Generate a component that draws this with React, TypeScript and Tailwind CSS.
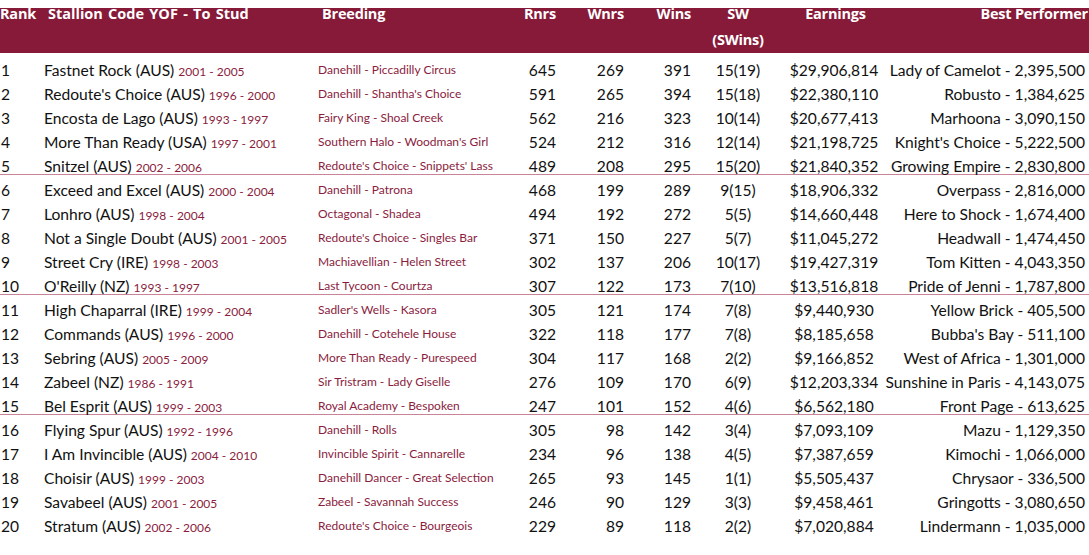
import React from 'react';

interface Sire {
  rank: number;
  name: string;
  yof: string;
  breeding: string;
  rnrs: number;
  wnrs: number;
  wins: number;
  sw: string;
  earnings: string;
  best: string;
}

const sires: Sire[] = [
  { rank: 1, name: 'Fastnet Rock (AUS)', yof: '2001 - 2005', breeding: 'Danehill - Piccadilly Circus', rnrs: 645, wnrs: 269, wins: 391, sw: '15(19)', earnings: '$29,906,814', best: 'Lady of Camelot - 2,395,500' },
  { rank: 2, name: "Redoute's Choice (AUS)", yof: '1996 - 2000', breeding: "Danehill - Shantha's Choice", rnrs: 591, wnrs: 265, wins: 394, sw: '15(18)', earnings: '$22,380,110', best: 'Robusto - 1,384,625' },
  { rank: 3, name: 'Encosta de Lago (AUS)', yof: '1993 - 1997', breeding: 'Fairy King - Shoal Creek', rnrs: 562, wnrs: 216, wins: 323, sw: '10(14)', earnings: '$20,677,413', best: 'Marhoona - 3,090,150' },
  { rank: 4, name: 'More Than Ready (USA)', yof: '1997 - 2001', breeding: "Southern Halo - Woodman's Girl", rnrs: 524, wnrs: 212, wins: 316, sw: '12(14)', earnings: '$21,198,725', best: "Knight's Choice - 5,222,500" },
  { rank: 5, name: 'Snitzel (AUS)', yof: '2002 - 2006', breeding: "Redoute's Choice - Snippets' Lass", rnrs: 489, wnrs: 208, wins: 295, sw: '15(20)', earnings: '$21,840,352', best: 'Growing Empire - 2,830,800' },
  { rank: 6, name: 'Exceed and Excel (AUS)', yof: '2000 - 2004', breeding: 'Danehill - Patrona', rnrs: 468, wnrs: 199, wins: 289, sw: '9(15)', earnings: '$18,906,332', best: 'Overpass - 2,816,000' },
  { rank: 7, name: 'Lonhro (AUS)', yof: '1998 - 2004', breeding: 'Octagonal - Shadea', rnrs: 494, wnrs: 192, wins: 272, sw: '5(5)', earnings: '$14,660,448', best: 'Here to Shock - 1,674,400' },
  { rank: 8, name: 'Not a Single Doubt (AUS)', yof: '2001 - 2005', breeding: "Redoute's Choice - Singles Bar", rnrs: 371, wnrs: 150, wins: 227, sw: '5(7)', earnings: '$11,045,272', best: 'Headwall - 1,474,450' },
  { rank: 9, name: 'Street Cry (IRE)', yof: '1998 - 2003', breeding: 'Machiavellian - Helen Street', rnrs: 302, wnrs: 137, wins: 206, sw: '10(17)', earnings: '$19,427,319', best: 'Tom Kitten - 4,043,350' },
  { rank: 10, name: "O'Reilly (NZ)", yof: '1993 - 1997', breeding: 'Last Tycoon - Courtza', rnrs: 307, wnrs: 122, wins: 173, sw: '7(10)', earnings: '$13,516,818', best: 'Pride of Jenni - 1,787,800' },
  { rank: 11, name: 'High Chaparral (IRE)', yof: '1999 - 2004', breeding: "Sadler's Wells - Kasora", rnrs: 305, wnrs: 121, wins: 174, sw: '7(8)', earnings: '$9,440,930', best: 'Yellow Brick - 405,500' },
  { rank: 12, name: 'Commands (AUS)', yof: '1996 - 2000', breeding: 'Danehill - Cotehele House', rnrs: 322, wnrs: 118, wins: 177, sw: '7(8)', earnings: '$8,185,658', best: "Bubba's Bay - 511,100" },
  { rank: 13, name: 'Sebring (AUS)', yof: '2005 - 2009', breeding: 'More Than Ready - Purespeed', rnrs: 304, wnrs: 117, wins: 168, sw: '2(2)', earnings: '$9,166,852', best: 'West of Africa - 1,301,000' },
  { rank: 14, name: 'Zabeel (NZ)', yof: '1986 - 1991', breeding: 'Sir Tristram - Lady Giselle', rnrs: 276, wnrs: 109, wins: 170, sw: '6(9)', earnings: '$12,203,334', best: 'Sunshine in Paris - 4,143,075' },
  { rank: 15, name: 'Bel Esprit (AUS)', yof: '1999 - 2003', breeding: 'Royal Academy - Bespoken', rnrs: 247, wnrs: 101, wins: 152, sw: '4(6)', earnings: '$6,562,180', best: 'Front Page - 613,625' },
  { rank: 16, name: 'Flying Spur (AUS)', yof: '1992 - 1996', breeding: 'Danehill - Rolls', rnrs: 305, wnrs: 98, wins: 142, sw: '3(4)', earnings: '$7,093,109', best: 'Mazu - 1,129,350' },
  { rank: 17, name: 'I Am Invincible (AUS)', yof: '2004 - 2010', breeding: 'Invincible Spirit - Cannarelle', rnrs: 234, wnrs: 96, wins: 138, sw: '4(5)', earnings: '$7,387,659', best: 'Kimochi - 1,066,000' },
  { rank: 18, name: 'Choisir (AUS)', yof: '1999 - 2003', breeding: 'Danehill Dancer - Great Selection', rnrs: 265, wnrs: 93, wins: 145, sw: '1(1)', earnings: '$5,505,437', best: 'Chrysaor - 336,500' },
  { rank: 19, name: 'Savabeel (AUS)', yof: '2001 - 2005', breeding: 'Zabeel - Savannah Success', rnrs: 246, wnrs: 90, wins: 129, sw: '3(3)', earnings: '$9,458,461', best: 'Gringotts - 3,080,650' },
  { rank: 20, name: 'Stratum (AUS)', yof: '2002 - 2006', breeding: "Redoute's Choice - Bourgeois", rnrs: 229, wnrs: 89, wins: 118, sw: '2(2)', earnings: '$7,020,884', best: 'Lindermann - 1,035,000' },
];

// Column widths measured off the print layout
const cols = 'grid grid-cols-[44px_274px_182px_56px_68px_67px_94px_98px_202px]';

export default function App() {
  return (
    <div className="w-[1089px] h-[555px] bg-white pt-[8px] overflow-hidden text-[#111111]" style={{ fontFamily: 'Lato, "Noto Sans", sans-serif' }}>
      <div className="h-[45px] bg-[#861a38] overflow-hidden">
        <div
          className={`${cols} -mt-[7px] text-white font-bold text-[14.5px] leading-[26px] tracking-[-0.2px] whitespace-nowrap`}
          style={{ fontFamily: '"Open Sans", Lato, sans-serif' }}
        >
          <div>Rank</div>
          <div className="pl-[4px] tracking-[0px] [word-spacing:1.5px]">Stallion Code YOF - To Stud</div>
          <div className="pl-[4px]">Breeding</div>
          <div className="text-right">Rnrs</div>
          <div className="text-right">Wnrs</div>
          <div className="text-right">Wins</div>
          <div className="text-center">SW<br />(SWins)</div>
          <div className="text-center pl-[3px]">Earnings</div>
          <div className="text-right -mr-[3px]">Best Performer</div>
        </div>
      </div>

      <div className="pt-[5px]">
        {sires.map((s) => {
          const divider = s.rank % 5 === 0 && s.rank < 20;
          return (
            <div
              key={s.rank}
              className={`${cols} text-[15.6px] leading-[24px] whitespace-nowrap ${divider ? 'h-[21px] mb-[3px] border-b border-[#c98597]' : 'h-[24px]'}`}
            >
              <div className="pl-[1px]">{s.rank}</div>
              <div>
                {s.name} <span className="text-[12px] text-[#8a1c3e]">{s.yof}</span>
              </div>
              <div className="text-[12px] text-[#8a1c3e]">{s.breeding}</div>
              <div className="text-right">{s.rnrs}</div>
              <div className="text-right">{s.wnrs}</div>
              <div className="text-right">{s.wins}</div>
              <div className="text-center">{s.sw}</div>
              <div className="text-center">{s.earnings}</div>
              <div className="text-right">{s.best}</div>
            </div>
          );
        })}
      </div>
    </div>
  );
}
